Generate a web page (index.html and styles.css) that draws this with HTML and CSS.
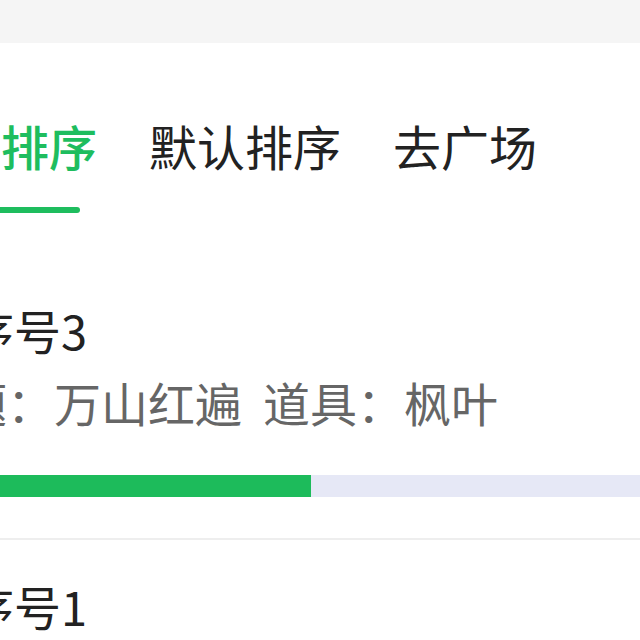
FILE: index.html
```html
<!DOCTYPE html>
<html>
<head>
  <meta charset="UTF-8">
  <title>活动列表</title>
  <link rel="stylesheet" href="styles.css">
</head>
<body>
  <div class="topbar"></div>

  <div class="tabs">
    <div class="tab active">
      <span>热门排序</span>
      <i class="line"></i>
    </div>
    <div class="tab"><span>默认排序</span></div>
    <div class="tab"><span>去广场</span></div>
  </div>

  <div class="list">
    <div class="item">
      <div class="title">序号3</div>
      <div class="desc"><span>题：万山红遍</span><span>道具：枫叶</span></div>
      <div class="progress"><div class="bar" style="width: 48.7%"></div></div>
    </div>
    <div class="item">
      <div class="title">序号1</div>
      <div class="desc"><span>题：层林尽染</span><span>道具：银杏</span></div>
      <div class="progress"><div class="bar" style="width: 30%"></div></div>
    </div>
  </div>
</body>
</html>
```

FILE: styles.css
```css
html, body {
  margin: 0;
  padding: 0;
  overflow: hidden;
  background-color: #fff;
  font-family: "Noto Sans CJK SC", "Noto Sans", sans-serif;
}
.topbar {
  height: 43px;
  background-color: #f5f5f5;
}
.tabs {
  display: flex;
  gap: 52px;
  margin-left: -95px;
  padding: 78px 0 51px;
}
.tab {
  display: flex;
  flex-direction: column;
  align-items: center;
  font-size: 48px;
  line-height: 48px;
  color: #222;
}
.tab.active {
  color: #1ebd5e;
  font-weight: 500;
}
.tab .line {
  display: block;
  width: 158px;
  height: 6px;
  margin-top: 38px;
  border-radius: 3px;
  background-color: #1ebd5e;
}
.list {
  margin: 0 -35px;
}
.item {
  padding: 43px 0 41px;
  border-bottom: 2px solid #eeeeee;
}
.title {
  padding-left: 2px;
  font-size: 47px;
  line-height: 46px;
  color: #222;
}
.desc {
  margin-top: 25px;
  margin-left: -5px;
  font-size: 47px;
  line-height: 47px;
  color: #666;
  white-space: nowrap;
}
.desc span + span {
  margin-left: 21px;
}
.progress {
  margin-top: 50px;
  height: 22px;
  background-color: #e6e8f6;
}
.bar {
  height: 100%;
  background-color: #1dbb5b;
}
```
